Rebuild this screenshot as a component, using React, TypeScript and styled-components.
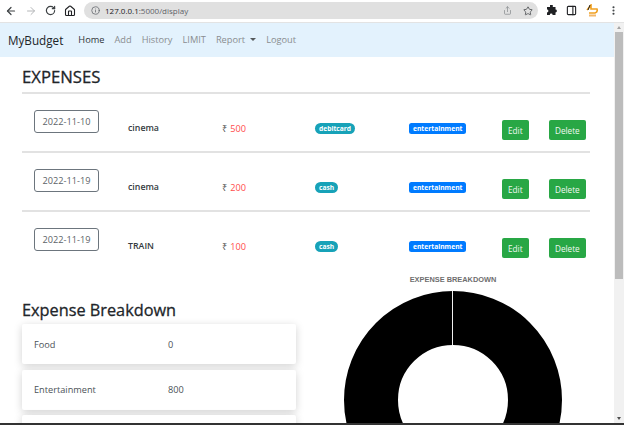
import React from "react";
import styled, { createGlobalStyle } from "styled-components";
import { ArrowLeft, ArrowRight, RotateCw, Home, Info, Share, Star, PanelRight, MoreVertical } from "lucide-react";

const Global = createGlobalStyle`
  html, body { margin: 0; padding: 0; background: #fff; overflow: hidden; }
  * { box-sizing: border-box; }
`;

const Page = styled.div`
  width: 624px;
  height: 425px;
  overflow: hidden;
  display: flex;
  flex-direction: column;
  font-family: "Open Sans", "Noto Sans", sans-serif;
  color: #212529;
  background: #fff;
`;

const Toolbar = styled.div`
  height: 23px;
  flex: none;
  display: flex;
  align-items: center;
  padding: 0 0 1px 5px;
  background: #fff;
  border-bottom: 1px solid #e3e3e3;
`;

const NavIcons = styled.div`
  display: flex;
  align-items: center;
  gap: 8px;
  width: 79px;
  flex: none;
`;

const AddressBar = styled.div`
  width: 454px;
  height: 17px;
  flex: none;
  display: flex;
  align-items: center;
  gap: 5px;
  padding: 0 5px 0 7px;
  border-radius: 9px;
  background: #e0e0e0;
  font-size: 8px;
  color: #5f6368;
`;

const Host = styled.span`
  color: #202124;
`;

const Url = styled.span`
  flex: 1;
  white-space: nowrap;
`;

const AddressIcons = styled.div`
  display: flex;
  align-items: center;
  gap: 11px;
`;

const ExtIcons = styled.div`
  display: flex;
  align-items: center;
  gap: 9px;
  margin-left: 8px;
`;

const Viewport = styled.div`
  flex: 1;
  min-height: 0;
  display: flex;
`;

const Content = styled.div`
  flex: 1;
  min-width: 0;
  overflow: hidden;
  display: flex;
  flex-direction: column;
`;

const Navbar = styled.nav`
  height: 34px;
  flex: none;
  display: flex;
  align-items: center;
  padding: 0 0 1px 8px;
  background: #e3f2fd;
`;

const Brand = styled.span`
  font-size: 11.7px;
  color: #212529;
  margin-right: 15px;
`;

const NavLink = styled.span<{ $active?: boolean }>`
  font-size: 9.25px;
  margin-right: 10px;
  display: inline-flex;
  align-items: center;
  color: ${(p) => (p.$active ? "#303438" : "#8a8d90")};
`;

const Caret = styled.i`
  display: inline-block;
  margin-left: 5px;
  border-top: 3px solid #55595c;
  border-left: 3px solid transparent;
  border-right: 3px solid transparent;
`;

const Main = styled.main`
  flex: 1;
  padding: 0 24px 0 22px;
`;

const Title = styled.h1`
  margin: 0;
  height: 35px;
  padding-top: 7px;
  font-size: 16.7px;
  line-height: 26px;
  font-weight: 400;
  -webkit-text-stroke: 0.3px #212529;
  color: #212529;
`;

const Row = styled.div`
  height: 59px;
  display: grid;
  grid-template-columns: 94px 94px 93px 94px 93px 47px auto;
  padding-left: 12px;
  align-items: center;
  border-top: 2px solid #e2e2e2;
`;

const DateBox = styled.div`
  width: 65px;
  height: 23px;
  margin-top: -2px;
  display: flex;
  align-items: center;
  justify-content: center;
  border: 1px solid #6c757d;
  border-radius: 3px;
  font-size: 9.2px;
  color: #5d6368;
`;

const Name = styled.div`
  font-size: 8.8px;
  font-weight: 600;
  color: #343a40;
  margin-top: 10px;
`;

const Amount = styled.div`
  font-size: 9.2px;
  color: #ff4d4d;
  margin-top: 11px;
`;

const Rupee = styled.span`
  color: #555;
  margin-right: 3px;
`;

const Badge = styled.span<{ $bg: string; $pill?: boolean }>`
  justify-self: start;
  padding: 0 4px;
  height: 11px;
  line-height: 11px;
  margin-top: 12px;
  border-radius: ${(p) => (p.$pill ? "6px" : "2.5px")};
  background: ${(p) => p.$bg};
  color: #fff;
  font-size: 6.7px;
  font-weight: 700;
`;

const Action = styled.button`
  justify-self: start;
  height: 20px;
  margin-top: 15px;
  padding: 0 6px;
  border: 0;
  border-radius: 2px;
  background: #28a745;
  color: #f1f8f2;
  font-family: inherit;
  font-size: 8.2px;
`;

const Lower = styled.section`
  display: flex;
  gap: 20px;
`;

const Column = styled.div`
  width: 274px;
  flex: none;
`;

const SubTitle = styled.h2`
  margin: 30px 0 3px;
  font-size: 16.3px;
  line-height: 22px;
  font-weight: 400;
  -webkit-text-stroke: 0.3px #212529;
  color: #212529;
`;

const Card = styled.div`
  height: 40px;
  margin-bottom: 5.5px;
  display: grid;
  grid-template-columns: 134px 1fr;
  align-items: center;
  padding-left: 12px;
  border-radius: 2px;
  background: #fff;
  box-shadow: 0 2px 8px rgba(0, 0, 0, 0.18);
  font-size: 9.2px;
  color: #4c5257;
`;

const ChartTitle = styled.div`
  margin-top: 6px;
  height: 12px;
  line-height: 10px;
  text-align: center;
  font-family: "Liberation Sans", Arial, sans-serif;
  font-size: 7.4px;
  font-weight: 700;
  color: #6e6e6e;
`;

const Donut = styled.svg`
  display: block;
  margin: 4px auto 0;
`;

const Scrollbar = styled.div`
  width: 10px;
  flex: none;
  display: flex;
  flex-direction: column;
  background: #f1f1f1;
`;

const ScrollArrow = styled.div`
  height: 9px;
  flex: none;
  display: flex;
  align-items: center;
  justify-content: center;
  font-size: 0;
`;

const ArrowUp = styled.i`
  border-bottom: 3px solid #a3a3a3;
  border-left: 2.5px solid transparent;
  border-right: 2.5px solid transparent;
`;

const ArrowDown = styled.i`
  border-top: 3px solid #505050;
  border-left: 2.5px solid transparent;
  border-right: 2.5px solid transparent;
`;

const Thumb = styled.div`
  width: 8px;
  height: 247px;
  margin: 0 1px;
  flex: none;
  background: #bcbcbc;
`;

const Spacer = styled.div`
  flex: 1;
`;

const BottomEdge = styled.div`
  height: 2px;
  flex: none;
  background: #333;
`;

const expenses = [
  { date: "2022-11-10", name: "cinema", amount: 500, mode: "debitcard" },
  { date: "2022-11-19", name: "cinema", amount: 200, mode: "cash" },
  { date: "2022-11-19", name: "TRAIN", amount: 100, mode: "cash" },
];

const ExtensionMark = () => (
  <svg width="13" height="14" viewBox="0 0 13 14" fill="none">
    <path d="M1 6 L5 1 L5 5 L11 5 Q12 8 9 9 L3 9" stroke="#f0a020" strokeWidth="1.6" />
    <path d="M4 1 L2 6" stroke="#222" strokeWidth="1" />
    <rect x="3" y="10.5" width="7" height="2" fill="#f3b86a" />
  </svg>
);

const PuzzleMark = () => (
  <svg width="11" height="11" viewBox="0 0 11 11">
    <path d="M4 0.5 a1.4 1.4 0 0 1 2.8 0 V2 H9.5 V4.6 a1.4 1.4 0 0 1 0 2.8 V10 H6.6 a1.4 1.4 0 0 0-2.8 0 H1 V7.4 a1.4 1.4 0 0 0 0-2.8 V2 H4 Z" fill="#202124" />
  </svg>
);

export default function App() {
  return (
    <Page>
      <Global />
      <Toolbar>
        <NavIcons>
          <ArrowLeft size={12} color="#3c4043" strokeWidth={2.4} />
          <ArrowRight size={12} color="#b4b6b8" strokeWidth={2} />
          <RotateCw size={11} color="#3c4043" strokeWidth={2.6} />
          <Home size={12} color="#202124" strokeWidth={2.2} />
        </NavIcons>
        <AddressBar>
          <Info size={9} color="#5f6368" />
          <Url>
            <Host>127.0.0.1</Host>:5000/display
          </Url>
          <AddressIcons>
            <Share size={9} color="#8a8d90" />
            <Star size={10} color="#4a4d50" />
          </AddressIcons>
        </AddressBar>
        <ExtIcons>
          <PuzzleMark />
          <PanelRight size={11} color="#202124" strokeWidth={2.4} />
          <ExtensionMark />
          <MoreVertical size={11} color="#3c4043" strokeWidth={2.6} />
        </ExtIcons>
      </Toolbar>
      <Viewport>
        <Content>
          <Navbar>
            <Brand>MyBudget</Brand>
            <NavLink $active>Home</NavLink>
            <NavLink>Add</NavLink>
            <NavLink>History</NavLink>
            <NavLink>LIMIT</NavLink>
            <NavLink>
              Report<Caret />
            </NavLink>
            <NavLink>Logout</NavLink>
          </Navbar>
          <Main>
            <Title>EXPENSES</Title>
            {expenses.map((e, i) => (
              <Row key={i}>
                <DateBox>{e.date}</DateBox>
                <Name>{e.name}</Name>
                <Amount>
                  <Rupee>₹</Rupee>
                  {e.amount}
                </Amount>
                <Badge $bg="#17a2b8" $pill>{e.mode}</Badge>
                <Badge $bg="#007bff">entertainment</Badge>
                <Action>Edit</Action>
                <Action>Delete</Action>
              </Row>
            ))}
            <Lower>
              <Column>
                <SubTitle>Expense Breakdown</SubTitle>
                <Card>
                  <span>Food</span>
                  <span>0</span>
                </Card>
                <Card>
                  <span>Entertainment</span>
                  <span>800</span>
                </Card>
                <Card />
              </Column>
              <Column>
                <ChartTitle>EXPENSE BREAKDOWN</ChartTitle>
                <Donut width="218" height="218" viewBox="0 0 218 218">
                  <circle cx="109" cy="109" r="82" fill="none" stroke="#000" strokeWidth="54" />
                  <line x1="108.5" y1="0" x2="108.5" y2="54" stroke="#f0f0f0" strokeWidth="1" />
                </Donut>
              </Column>
            </Lower>
          </Main>
        </Content>
        <Scrollbar>
          <ScrollArrow><ArrowUp /></ScrollArrow>
          <Thumb />
          <Spacer />
          <ScrollArrow><ArrowDown /></ScrollArrow>
        </Scrollbar>
      </Viewport>
      <BottomEdge />
    </Page>
  );
}
